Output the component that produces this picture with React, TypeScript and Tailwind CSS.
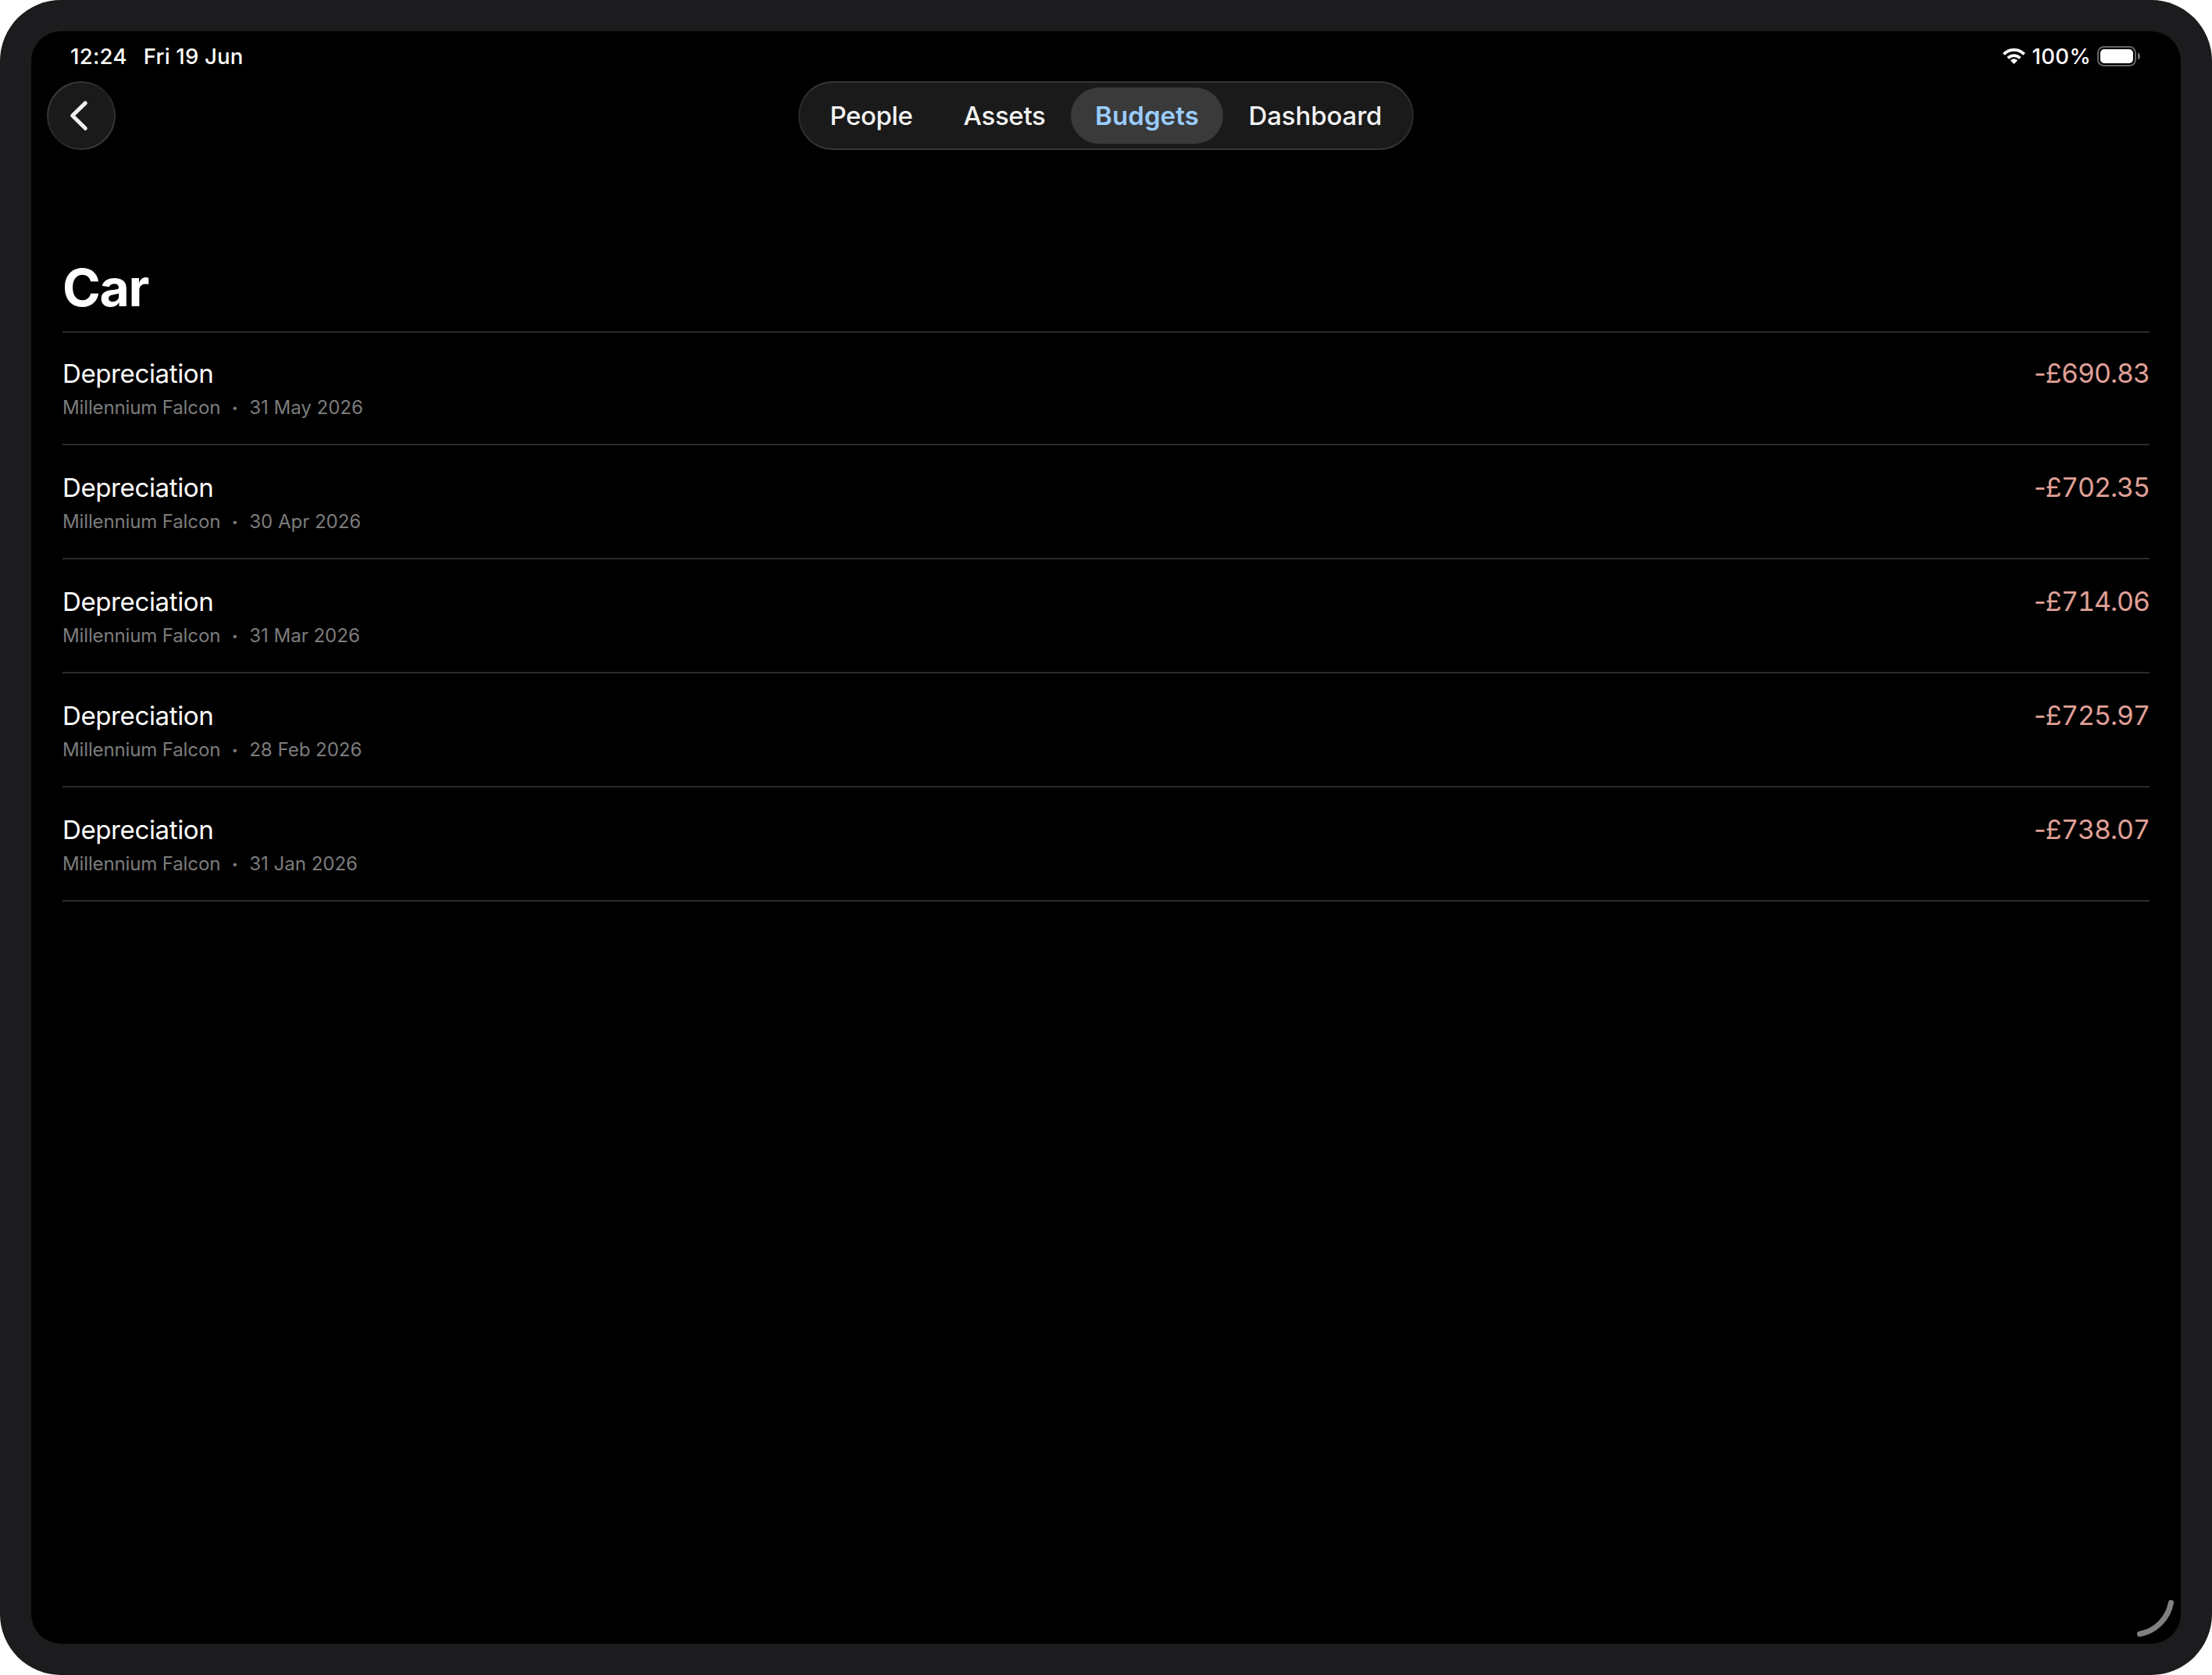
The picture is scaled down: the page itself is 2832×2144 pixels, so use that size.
import { clsx } from "clsx";

interface Transaction {
  title: string;
  asset: string;
  date: string;
  amount: string;
}

const transactions: Transaction[] = [
  { title: "Depreciation", asset: "Millennium Falcon", date: "31 May 2026", amount: "690.83" },
  { title: "Depreciation", asset: "Millennium Falcon", date: "30 Apr 2026", amount: "702.35" },
  { title: "Depreciation", asset: "Millennium Falcon", date: "31 Mar 2026", amount: "714.06" },
  { title: "Depreciation", asset: "Millennium Falcon", date: "28 Feb 2026", amount: "725.97" },
  { title: "Depreciation", asset: "Millennium Falcon", date: "31 Jan 2026", amount: "738.07" },
];

const tabs = [
  { label: "People", className: "w-[171px] tracking-[-0.4px]" },
  { label: "Assets", className: "w-[170px] tracking-[-0.35px]" },
  { label: "Budgets", className: "w-[195px] tracking-[0.1px]" },
  { label: "Dashboard", className: "w-[236px] tracking-[-0.15px]" },
];

function WifiIcon() {
  return (
    <svg width="29" height="20" viewBox="0 0 29 20" fill="none" stroke="white" strokeWidth="3.8">
      <path d="M1.4 7.4A18.2 18.2 0 0 1 27.6 7.4" />
      <path d="M6.7 12.4A10.9 10.9 0 0 1 22.3 12.4" />
      <path
        d="M14.5 18.9L11.1 15.4A5 5 0 0 1 17.9 15.4Z"
        fill="white"
        strokeWidth="1.6"
        strokeLinejoin="round"
      />
    </svg>
  );
}

function BatteryIcon() {
  return (
    <svg width="55" height="26" viewBox="0 0 55 26" fill="none">
      <rect x="1" y="1" width="48" height="24" rx="7.5" stroke="#666666" strokeWidth="2" />
      <rect x="4" y="4" width="42" height="18" rx="5" fill="white" />
      <path d="M52 8.6C56 10 56 16 52 17.4Z" fill="#757575" />
    </svg>
  );
}

function StatusBar() {
  return (
    <div className="flex h-9 items-center pr-[52px] pl-[50px] text-[27.5px] leading-9 font-[460]">
      <span className="tracking-[0.3px]">12:24</span>
      <span className="ml-[21px] tracking-[0.2px]">Fri 19 Jun</span>
      <div className="flex-1" />
      <WifiIcon />
      <span className="ml-[9px] tracking-[0.3px]">100%</span>
      <div className="ml-[8px]">
        <BatteryIcon />
      </div>
    </div>
  );
}

function NavBar() {
  return (
    <header className="mt-3.5 flex items-center justify-between px-5">
      <button
        aria-label="Back"
        className="size-[88px] rounded-full bg-linear-to-br from-[#464646] via-[#222222] to-[#464646] p-0.5"
      >
        <span className="flex size-full items-center justify-center rounded-full bg-[#1a1a1a]">
          <svg
            width="84"
            height="84"
            viewBox="0 0 84 84"
            fill="none"
            stroke="#f1f1f1"
            strokeWidth="5"
            strokeLinecap="round"
            strokeLinejoin="round"
          >
            <path d="M47.3 25.9L30.7 42L47.3 58.3" />
          </svg>
        </span>
      </button>

      <nav className="rounded-full bg-linear-to-b from-[#363636] via-[#262626] to-[#363636] p-0.5">
        <div className="flex rounded-full bg-[#1a1a1a] p-1.5">
          {tabs.map((tab) => (
            <button
              key={tab.label}
              className={clsx(
                "h-[72px] rounded-full pt-0.5 text-center text-[33px]",
                tab.className,
                tab.label === "Budgets"
                  ? "bg-[#3a3a3a] font-semibold text-[#99cdff]"
                  : "font-medium text-[#f2f2f2]",
              )}
            >
              {tab.label}
            </button>
          ))}
        </div>
      </nav>

      <div className="w-[88px]" />
    </header>
  );
}

function TransactionRow({ title, asset, date, amount }: Transaction) {
  return (
    <li className="flex h-[146px] items-start justify-between border-b-2 border-[#2b2b2b] pt-[34px] first:h-36 first:pt-8">
      <div>
        <p className="text-[33px] leading-10 tracking-[-0.38px]">{title}</p>
        <p className="mt-2 flex text-[24px] leading-8 text-[#7c7c7c]">
          <span className="tracking-[-0.13px]">{asset}</span>
          <span className="w-[37px] text-center text-[14px]">•</span>
          <span>{date}</span>
        </p>
      </div>
      <p className="text-[34px] leading-10 tracking-[-0.7px] text-[#e0a097]">
        -£<span className="tracking-[-1.05px] tabular-nums">{amount}</span>
      </p>
    </li>
  );
}

export default function App() {
  return (
    <div className="h-[2144px] w-[2832px] bg-white font-[Inter,sans-serif] text-white">
      <div className="size-full rounded-[78px] bg-[#1c1c1e] p-10">
        <div className="relative size-full overflow-hidden rounded-[38px] bg-black pt-3.5">
          <StatusBar />
          <NavBar />

          <main className="mt-[136px] px-10">
            <h1 className="h-[98px] border-b-2 border-[#2b2b2b] text-[66px] leading-[80px] font-bold tracking-[-1.3px]">
              Car
            </h1>
            <ul>
              {transactions.map((t) => (
                <TransactionRow key={t.date} {...t} />
              ))}
            </ul>
          </main>

          {/* Window resize handle */}
          <svg
            className="absolute right-[9px] bottom-[9px]"
            width="47"
            height="47"
            viewBox="0 0 47 47"
            fill="none"
            stroke="#808080"
            strokeWidth="7"
            strokeLinecap="round"
          >
            <path d="M43.5 3.5A50 50 0 0 1 3.5 43.5" />
          </svg>
        </div>
      </div>
    </div>
  );
}
